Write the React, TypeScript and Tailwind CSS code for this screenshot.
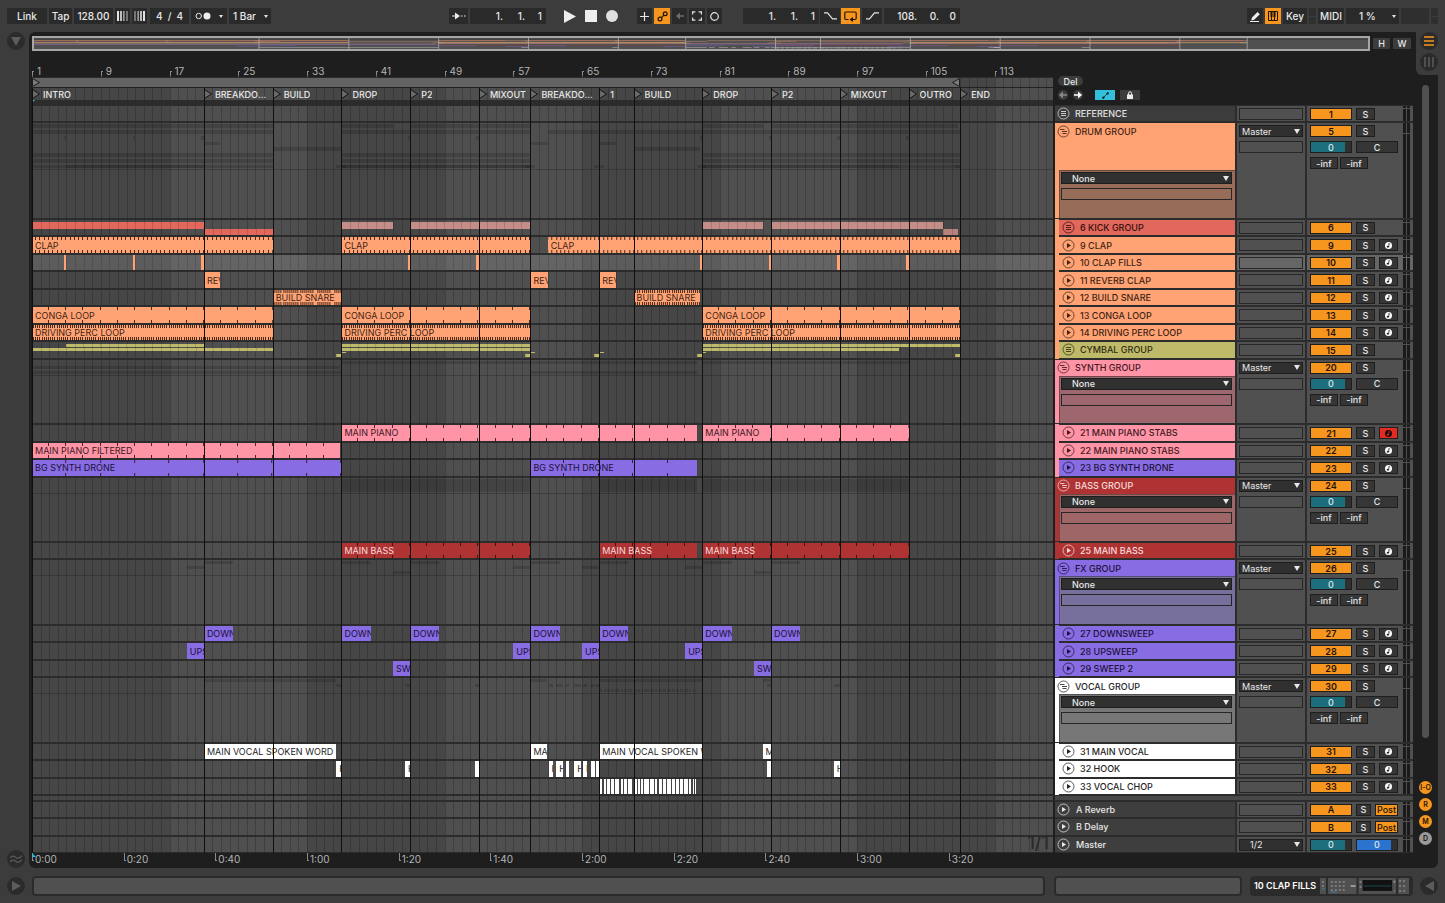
import type { CSSProperties, ReactNode } from "react";

const BARS = 118.8;

const pct = (bars: number) => `${(bars / BARS) * 100}%`;

const TONES = {
   gray: { hex: "#3c3c3c", bg: "bg-[#3c3c3c]", panel: "bg-[#3c3c3c]", text: "text-[#e4e4e4]" },
   orange: { hex: "#ffa374", bg: "bg-[#ffa374]", panel: "bg-[#976c59]", text: "text-[#3f2414]" },
   red: { hex: "#e2675c", bg: "bg-[#e2675c]", panel: "bg-[#8a4a45]", text: "text-[#36100c]" },
   olive: { hex: "#bfba69", bg: "bg-[#bfba69]", panel: "bg-[#7c7a50]", text: "text-[#2f2d14]" },
   pink: { hex: "#ff94a6", bg: "bg-[#ff94a6]", panel: "bg-[#9e666f]", text: "text-[#41191f]" },
   purple: { hex: "#886ce4", bg: "bg-[#886ce4]", panel: "bg-[#77709c]", text: "text-[#1c1238]" },
   crimson: { hex: "#af3333", bg: "bg-[#af3333]", panel: "bg-[#9e6666]", text: "text-[#f6dcdc]" },
   white: { hex: "#ffffff", bg: "bg-white", panel: "bg-[#777777]", text: "text-[#262626]" },
};

type Tone = keyof typeof TONES;
type Clip = [start: number, end: number, label?: string];
type Strip = { top: string; height: string; fill: string; clips: Clip[] };

type Track = {
   name: string;
   num: string;
   tone: Tone;
   kind: "open" | "folded" | "track";
   group?: string;
   size?: number;
   clips?: Clip[];
   tick?: number;
   strips?: Strip[];
   selected?: boolean;
   armed?: boolean;
};

const named = (label: string, spans: [number, number][]): Clip[] => spans.map(([a, b]) => [a, b, label]);

const CHOPS: Clip[] = [
   [0, 0.36], [0.5, 0.76], [0.96, 1.27], [1.4, 1.75], [1.86, 2.34], [2.48, 2.8], [2.9, 3.2], [3.35, 3.76], [4, 4.4],
   [4.5, 4.75], [4.85, 4.95], [5, 5.1], [5.2, 5.3], [5.36, 5.82], [5.86, 6.33], [6.5, 6.75], [7, 7.3], [7.45, 7.75],
   [7.9, 8.35], [8.5, 8.77], [8.93, 9.25], [9.4, 9.75], [9.9, 10.36], [10.5, 10.7], [10.9, 11], [11.15, 11.25],
].map(([a, b]): Clip => [67 + a, 67 + b]);

const TRACKS: Track[] = [
   { name: "REFERENCE", num: "1", tone: "gray", kind: "folded" },
   { name: "DRUM GROUP", num: "5", tone: "orange", kind: "open", size: 193 },
   {
      name: "6 KICK GROUP",
      num: "6",
      tone: "red",
      kind: "folded",
      group: "DRUM GROUP",
      strips: [
         { top: "12%", height: "44%", fill: "bg-[#e2675c]", clips: [[1, 21]] },
         { top: "56%", height: "40%", fill: "bg-[#e2675c]", clips: [[21, 29]] },
         { top: "12%", height: "44%", fill: "bg-[#c58d87]", clips: [[37, 43], [45, 59], [79, 86], [87, 107]] },
         { top: "56%", height: "40%", fill: "bg-[#b8837d]", clips: [[107, 108.7]] },
      ],
   },
   { name: "9 CLAP", num: "9", tone: "orange", kind: "track", group: "DRUM GROUP", tick: 0.5, clips: named("CLAP", [[1, 29], [37, 59], [61, 109]]) },
   {
      name: "10 CLAP FILLS",
      num: "10",
      tone: "orange",
      kind: "track",
      group: "DRUM GROUP",
      selected: true,
      clips: [5, 13, 21, 45, 53, 79, 87, 95, 103].map((bar): Clip => [bar - 0.3, bar]),
   },
   { name: "11 REVERB CLAP", num: "11", tone: "orange", kind: "track", group: "DRUM GROUP", clips: named("REVERB", [[21, 22.9], [59, 61], [67, 68.9]]) },
   { name: "12 BUILD SNARE", num: "12", tone: "orange", kind: "track", group: "DRUM GROUP", tick: 0.25, clips: named("BUILD SNARE", [[29, 37], [71, 78.7]]) },
   { name: "13 CONGA LOOP", num: "13", tone: "orange", kind: "track", group: "DRUM GROUP", tick: 2, clips: named("CONGA LOOP", [[1, 29], [37, 59], [79, 109]]) },
   { name: "14 DRIVING PERC LOOP", num: "14", tone: "orange", kind: "track", group: "DRUM GROUP", tick: 0.25, clips: named("DRIVING PERC LOOP", [[1, 29], [37, 59], [79, 109]]) },
   {
      name: "CYMBAL GROUP",
      num: "15",
      tone: "olive",
      kind: "folded",
      group: "DRUM GROUP",
      strips: [
         { top: "12%", height: "19%", fill: "bg-[#bfba69]", clips: [[5, 21], [37, 59], [79, 109]] },
         { top: "37%", height: "19%", fill: "bg-[#bfba69]", clips: [[1, 29], [37, 59], [79, 101.9]] },
         { top: "62%", height: "10%", fill: "bg-[#bfba69]", clips: [[37, 37.5], [59, 59.5], [67, 67.5], [79, 79.4]] },
         { top: "76%", height: "19%", fill: "bg-[#bfba69]", clips: [[36.4, 37], [58.4, 59], [66.4, 67], [78.4, 79], [108.4, 109]] },
      ],
   },
   { name: "SYNTH GROUP", num: "20", tone: "pink", kind: "open", size: 131 },
   { name: "21 MAIN PIANO STABS", num: "21", tone: "pink", kind: "track", group: "SYNTH GROUP", tick: 2, armed: true, clips: named("MAIN PIANO", [[37, 78.4], [79, 103]]) },
   { name: "22 MAIN PIANO STABS", num: "22", tone: "pink", kind: "track", group: "SYNTH GROUP", tick: 2, clips: named("MAIN PIANO FILTERED", [[1, 36.8]]) },
   { name: "23 BG SYNTH DRONE", num: "23", tone: "purple", kind: "track", group: "SYNTH GROUP", tick: 4, clips: named("BG SYNTH DRONE", [[1, 37], [59, 78.4]]) },
   { name: "BASS GROUP", num: "24", tone: "crimson", kind: "open", size: 131 },
   { name: "25 MAIN BASS", num: "25", tone: "crimson", kind: "track", group: "BASS GROUP", tick: 2, clips: named("MAIN BASS", [[37, 59], [67, 78.4], [79, 103]]) },
   { name: "FX GROUP", num: "26", tone: "purple", kind: "open", size: 131 },
   {
      name: "27 DOWNSWEEP",
      num: "27",
      tone: "purple",
      kind: "track",
      group: "FX GROUP",
      clips: [21, 37, 45, 59, 67, 79, 87].map((bar): Clip => [bar, bar + 3.4, "DOWNSWEEP"]),
   },
   { name: "28 UPSWEEP", num: "28", tone: "purple", kind: "track", group: "FX GROUP", clips: named("UPSWEEP", [[19, 21], [57, 59], [65, 67], [77, 79]]) },
   { name: "29 SWEEP 2", num: "29", tone: "purple", kind: "track", group: "FX GROUP", clips: named("SWEEP", [[43, 45], [85, 87]]) },
   { name: "VOCAL GROUP", num: "30", tone: "white", kind: "open", size: 131 },
   { name: "31 MAIN VOCAL", num: "31", tone: "white", kind: "track", group: "VOCAL GROUP", clips: named("MAIN VOCAL SPOKEN WORD", [[21, 36.4], [59, 60.9], [67, 79], [86, 87]]) },
   {
      name: "32 HOOK",
      num: "32",
      tone: "white",
      kind: "track",
      group: "VOCAL GROUP",
      clips: [
         [36.4, 37, "H"], [44.4, 45, "H"], [52.5, 53], [61.1, 61.6, "H"], [62, 62.8, "H"], [63.1, 63.5], [64.1, 64.9, "H"],
         [65.1, 65.6, "H"], [66.1, 66.5], [66.6, 67], [86.5, 87], [94.3, 95, "H"],
      ],
   },
   { name: "33 VOCAL CHOP", num: "33", tone: "white", kind: "track", group: "VOCAL GROUP", clips: CHOPS },
];

const LOCATORS: [number, string][] = [
   [1, "INTRO"], [21, "BREAKDOWN"], [29, "BUILD"], [37, "DROP"], [45, "P2"], [53, "MIXOUT"], [59, "BREAKDOWN"],
   [67, "1"], [71, "BUILD"], [79, "DROP"], [87, "P2"], [95, "MIXOUT"], [103, "OUTRO"], [109, "END"],
];

const BEAT_MARKS = Array.from({ length: 15 }, (_, i) => 1 + i * 8);
const TIME_MARKS = ["0:00", "0:20", "0:40", "1:00", "1:20", "1:40", "2:00", "2:20", "2:40", "3:00", "3:20"];
const BARS_PER_MARK = 32 / 3;

const gridStyle: CSSProperties = {
   backgroundImage: [
      `repeating-linear-gradient(to right, rgba(0,0,0,.2) 0 1px, transparent 1px ${pct(1)})`,
      `repeating-linear-gradient(to right, #464646 0 ${pct(16)}, #4f4f4f ${pct(16)} ${pct(32)})`,
   ].join(","),
};

const allClips = (t: Track): Clip[] => t.clips ?? t.strips?.flatMap((s) => s.clips) ?? [];

function tickStyle(span: number, every: number): CSSProperties {
   const step = `${(every / span) * 100}%`;
   const line = `repeating-linear-gradient(to right, transparent 0 calc(${step} - 1px), rgba(30,12,5,.8) calc(${step} - 1px) ${step})`;
   return {
      backgroundImage: `${line}, ${line}`,
      backgroundSize: "100% 3px",
      backgroundPosition: "top, bottom",
      backgroundRepeat: "repeat-x",
   };
}

/* ---------- small controls ---------- */

function Tool({ label, children, className = "" }: { label: string; children?: ReactNode; className?: string }) {
   return (
      <button type="button" aria-label={label} className={`flex h-4 shrink-0 items-center justify-center bg-[#2a2a2a] ${className}`}>
         {children}
      </button>
   );
}

function Dropdown({ label, value, className = "", pad = "pl-0.5" }: { label: string; value: string; className?: string; pad?: string }) {
   return (
      <div className={`relative flex h-3 items-center border border-[#1e1e1e] bg-[#303030] ${className}`}>
         <select aria-label={label} defaultValue={value} className={`h-full w-full appearance-none bg-transparent leading-none text-[#e8e8e8] outline-none ${pad}`}>
            <option>{value}</option>
         </select>
         <svg viewBox="0 0 6 5" className="pointer-events-none absolute right-0.5 h-[5px] w-1.5" aria-hidden>
            <path d="M0 0h6L3 5z" fill="#e8e8e8" />
         </svg>
      </div>
   );
}

function Position({ label, parts, className = "" }: { label: string; parts: string[]; className?: string }) {
   return (
      <div role="group" aria-label={label} className={`flex h-4 w-[76px] shrink-0 items-center justify-end bg-[#2a2a2a] pr-1 ${className}`}>
         {parts.map((part, i) => (
            <input
               key={i}
               aria-label={`${label} ${["bars", "beats", "sixteenths"][i]}`}
               defaultValue={part}
               className={`bg-transparent text-right text-[10px] leading-none font-medium outline-none ${i === 2 ? "w-[17px]" : i === 1 ? "w-[22px]" : "w-7"}`}
            />
         ))}
      </div>
   );
}

function Slot({ className = "" }: { className?: string }) {
   return <div className={`h-3 shrink-0 border border-[#262626] ${className}`} />;
}

function RoundIcon({ kind }: { kind: Track["kind"] }) {
   return (
      <svg viewBox="0 0 13 13" className="size-[13px] shrink-0" fill="none" stroke="currentColor" aria-hidden>
         <circle cx="6.5" cy="6.5" r="5.5" strokeOpacity=".75" />
         {kind === "track" && <path d="M5 3.9v5.2l4-2.6z" fill="currentColor" stroke="none" />}
         {kind === "folded" && <path d="M4 4.5h5M4 6.5h5M4 8.5h5" strokeOpacity=".85" />}
         {kind === "open" && <path d="M3 4.5h4.5M5 6.5h5M5.5 8.5h4" strokeOpacity=".85" />}
      </svg>
   );
}

function SoloButton({ className = "w-[19px]" }: { className?: string }) {
   return (
      <button type="button" aria-label="Solo" className={`flex h-3 shrink-0 items-center justify-center border border-[#1e1e1e] bg-[#363636] ${className}`}>
         S
      </button>
   );
}

function ArmButton({ armed }: { armed?: boolean }) {
   return (
      <button
         type="button"
         aria-label="Arm recording"
         aria-pressed={!!armed}
         className={`flex h-3 w-[19px] shrink-0 items-center justify-center border border-[#1e1e1e] ${armed ? "bg-[#e52b20] text-[#1a0b0a]" : "bg-[#363636] text-white"}`}
      >
         <svg viewBox="0 0 7 7" className="size-[7px]" aria-hidden>
            <circle cx="3.5" cy="3.5" r="3.5" fill="currentColor" />
            <ellipse cx="2.9" cy="4.7" rx="1.2" ry=".9" fill={armed ? "#e52b20" : "#222"} />
            <path d="M3.8 4.7V1.4l1.4 1" fill="none" stroke={armed ? "#e52b20" : "#222"} strokeWidth=".7" />
         </svg>
      </button>
   );
}

function Activator({ children }: { children: string }) {
   return (
      <button type="button" aria-label={`Track ${children} active`} aria-pressed className="flex h-3 w-[42px] shrink-0 items-center justify-center border border-[#1e1e1e] bg-[#f7961e] font-semibold text-[#1c1205]">
         {children}
      </button>
   );
}

function Meter({ split }: { split?: boolean }) {
   return (
      <div className="ml-auto flex h-full gap-px" aria-hidden>
         {[0, 1].map((i) => (
            <div key={i} className="flex w-[3px] flex-col gap-px">
               <div className={`bg-[#1a1a1a] ${split ? "h-2.5" : "h-0.5"}`} />
               <div className="flex-1 bg-[#1a1a1a]" />
            </div>
         ))}
      </div>
   );
}

const VOLUME = "h-3 w-[42px] border border-[#1e1e1e] text-center leading-none text-[#dfe9ec] outline-none";

/* ---------- arrangement ---------- */

function Lane({ track }: { track: Track }) {
   const tone = TONES[track.tone];
   const children = track.kind === "open" ? TRACKS.filter((t) => t.group === track.name) : [];

   return (
      <div className="relative min-w-0 flex-1 overflow-hidden border-y border-[#2c2c2c]" style={gridStyle}>
         {track.selected && <div className="absolute inset-0 border-l border-[#a6dbe6] bg-white/12" />}
         {track.kind === "open" && (
            <div className={`flex flex-col border-b border-black/20 ${track.size === 193 ? "h-[47px]" : "h-4"}`}>
               {children.map((child) => (
                  <div key={child.num} className="relative flex-1">
                     {allClips(child).map(([a, b]) => (
                        <div key={a} className="absolute inset-x-0 top-px bottom-px bg-black/15" style={{ left: pct(a - 1), right: pct(BARS + 1 - b) }} />
                     ))}
                  </div>
               ))}
            </div>
         )}
         {track.strips?.map((strip) =>
            strip.clips.map(([a, b]) => (
               <div
                  key={`${strip.top}${a}`}
                  className={`absolute ${strip.fill}`}
                  style={{
                     top: strip.top,
                     height: strip.height,
                     left: pct(a - 1),
                     width: pct(b - a),
                     backgroundImage: `repeating-linear-gradient(to right, rgba(0,0,0,.14) 0 1px, transparent 1px ${100 / (b - a)}%)`,
                  }}
               />
            )),
         )}
         {track.clips?.map(([a, b, label]) => (
            <div
               key={a}
               className={`absolute inset-y-0 flex items-center overflow-hidden whitespace-nowrap ${tone.bg} ${tone.text} ${label ? "pl-[3px]" : ""}`}
               style={{ left: pct(a - 1), width: pct(b - a), ...(track.tick ? tickStyle(b - a, track.tick) : {}) }}
            >
               {label}
            </div>
         ))}
      </div>
   );
}

function TrackHeader({ track }: { track: Track }) {
   const tone = TONES[track.tone];
   const parent = TRACKS.find((t) => t.name === track.group);

   return (
      <div className="flex w-[180px] shrink-0">
         {parent && <div className={`w-1 shrink-0 ${TONES[parent.tone].bg}`} />}
         <div className={`flex min-w-0 flex-1 flex-col border-y border-[#2c2c2c] font-medium ${tone.bg} ${tone.text}`}>
            <div className={`flex shrink-0 ${track.size === 193 ? "h-[47px]" : track.kind === "open" ? "h-4" : "h-full"}`}>
               <div className={`flex items-center gap-[5px] ${track.kind === "open" ? "h-4" : "h-full"} ${parent ? "pl-[3px]" : "pl-0.5"}`}>
                  <RoundIcon kind={track.kind} />
                  <span className="whitespace-nowrap">{track.name}</span>
               </div>
            </div>
            {track.kind === "open" && (
               <div className={`ml-1 flex flex-1 flex-col gap-1 border-t border-l border-black/30 py-px pr-[3px] pl-px ${tone.panel}`}>
                  <Dropdown label={`${track.name} automation device`} value="None" pad="pl-2.5" />
                  <Slot />
               </div>
            )}
         </div>
      </div>
   );
}

function Cell({ className, selected, children }: { className: string; selected?: boolean; children: ReactNode }) {
   return (
      <div className={`ml-0.5 flex shrink-0 border-y border-[#2c2c2c] ${selected ? "bg-[#666666]" : "bg-[#505050]"} ${className}`}>
         {children}
      </div>
   );
}

function TrackRow({ track }: { track: Track }) {
   const open = track.kind === "open";

   return (
      <div className="flex min-h-0 basis-0 bg-[#2c2c2c]" style={{ flexGrow: track.size ?? 35 }}>
         <Lane track={track} />
         <div className="w-0.5 shrink-0 bg-[#1e1e1e]" />
         <TrackHeader track={track} />
         <Cell className="w-[68px] flex-col gap-1 px-0.5 pt-0.5" selected={track.selected}>
            {open ? <Dropdown label={`${track.name} output`} value="Master" /> : <Slot />}
            {open && <Slot />}
         </Cell>
         <Cell className="w-[106px] pr-[3px] pl-[3px] font-medium" selected={track.selected}>
            <div className="flex flex-col gap-1 pt-0.5">
               <div className="flex gap-1">
                  <Activator>{track.num}</Activator>
                  <SoloButton />
                  {track.kind === "track" && <ArmButton armed={track.armed} />}
               </div>
               {open && (
                  <>
                     <div className="flex gap-1">
                        <input aria-label={`${track.name} volume`} defaultValue="0" className={`${VOLUME} bg-linear-to-r from-[#1c6e7d] from-85% to-[#303030] to-85%`} />
                        <input aria-label={`${track.name} pan`} defaultValue="C" className={`${VOLUME} bg-[#363636]`} />
                     </div>
                     <div className="flex gap-0.5">
                        {["left", "right"].map((side) => (
                           <button key={side} type="button" aria-label={`${track.name} ${side} peak`} className="flex h-3 w-7 items-center justify-center border border-[#1e1e1e] bg-[#363636]">
                              -inf
                           </button>
                        ))}
                     </div>
                  </>
               )}
            </div>
            <Meter split={open} />
         </Cell>
      </div>
   );
}

function ReturnRow({ name, letter }: { name: string; letter?: string }) {
   return (
      <div className="flex min-h-0 basis-0 bg-[#2c2c2c]" style={{ flexGrow: 35 }}>
         <div className="relative min-w-0 flex-1 border-y border-[#2c2c2c]" style={gridStyle}>
            {!letter && <span className="absolute right-1 bottom-0 text-lg leading-none font-medium text-[#2a2a2a]">1/1</span>}
         </div>
         <div className="w-0.5 shrink-0 bg-[#1e1e1e]" />
         <div className="flex w-[180px] shrink-0 items-center gap-1.5 border-y border-[#2c2c2c] bg-[#3e3e3e] pl-0.5 font-medium">
            <RoundIcon kind="track" />
            {name}
         </div>
         <Cell className="w-[68px] flex-col px-0.5 pt-0.5">
            {letter ? <Slot /> : <Dropdown label="Master output" value="1/2" pad="pl-2.5" />}
         </Cell>
         <Cell className="w-[106px] gap-1 pr-[3px] pl-[3px] font-medium">
            {letter ? (
               <div className="flex gap-1 pt-0.5">
                  <Activator>{letter}</Activator>
                  <SoloButton className="w-[15px]" />
                  <button type="button" className="flex h-3 w-[23px] items-center justify-center border border-[#1e1e1e] bg-[#f7961e] text-[#1c1205]">
                     Post
                  </button>
               </div>
            ) : (
               <div className="flex gap-1 pt-0.5">
                  <input aria-label="Master volume" defaultValue="0" className={`${VOLUME} bg-linear-to-r from-[#1c6e7d] from-85% to-[#303030] to-85%`} />
                  <input aria-label="Cue volume" defaultValue="0" className={`${VOLUME} bg-linear-to-r from-[#2a74d0] from-85% to-[#303030] to-85%`} />
               </div>
            )}
            <Meter />
         </Cell>
      </div>
   );
}

function Overview() {
   return (
      <svg viewBox={`0 0 ${BARS} 13`} preserveAspectRatio="none" className="h-full w-full bg-[#505050]" role="img" aria-label="Arrangement overview">
         <rect x="0" y="1" width={BARS} height=".7" fill="#333" />
         {TRACKS.map((t, i) =>
            allClips(t).map(([a, b]) => (
               <rect key={`${t.num}-${a}-${b}`} x={a - 1} y={1.6 + i * 0.43} width={b - a} height=".7" fill={TONES[t.tone].hex} opacity=".5" />
            )),
         )}
         {LOCATORS.slice(1).map(([bar]) => (
            <rect key={bar} x={bar - 1} y="0" width=".08" height="13" fill="#b5b5b5" opacity=".8" />
         ))}
      </svg>
   );
}

function Rulers() {
   return (
      <div className="min-w-0 flex-1">
         <div className="relative mt-[13px] h-3.5 border-b border-[#2c2c2c] text-[10px] leading-none text-[#b4b4b4]">
            {BEAT_MARKS.map((bar) => (
               <div key={bar} className="absolute inset-y-0" style={{ left: pct(bar - 1) }}>
                  <span className="absolute bottom-0 h-1.5 w-0.5 border-t border-l border-[#8a8a8a]" />
                  <span className="absolute bottom-px left-[5px]">{bar}</span>
                  <span className="absolute bottom-0 h-0.5 w-px bg-[#666]" />
               </div>
            ))}
         </div>
         <div className="relative h-2.5 border-b border-[#222]" style={gridStyle}>
            <div className="absolute inset-y-0 left-0 bg-[#636363]" style={{ width: pct(108) }}>
               <svg viewBox="0 0 8 9" className="absolute inset-y-0 left-0 h-[9px] w-2" fill="#7a7a7a" stroke="#1c1c1c" aria-hidden>
                  <path d="M.5.5l7 4-7 4z" />
               </svg>
               <svg viewBox="0 0 8 9" className="absolute inset-y-0 right-0 h-[9px] w-2" fill="#7a7a7a" stroke="#1c1c1c" aria-hidden>
                  <path d="M7.5.5l-7 4 7 4z" />
               </svg>
            </div>
         </div>
         <div className="relative h-3" style={gridStyle}>
            {LOCATORS.map(([bar, label], i) => (
               <button
                  key={bar}
                  type="button"
                  className="absolute inset-y-0 flex items-center gap-[3px] overflow-hidden text-left font-medium"
                  style={{ left: pct(bar - 1), width: pct((LOCATORS[i + 1]?.[0] ?? 117) - bar) }}
               >
                  <svg viewBox="0 0 8 12" className="h-3 w-2 shrink-0" fill="#6a6a6a" stroke="#161616" aria-hidden>
                     <path d="M.5 1.5l7 4.5-7 4.5z" />
                  </svg>
                  <span className="truncate">{label}</span>
               </button>
            ))}
         </div>
         <div className="h-[5px] bg-[#2c2c2c]">
            <svg viewBox="0 0 3 3" className="size-[3px]" aria-hidden>
               <path d="M0 0h3L0 3z" fill="#33b7d2" />
            </svg>
         </div>
      </div>
   );
}

function RailButton({ label, children }: { label: string; children: ReactNode }) {
   return (
      <button type="button" aria-label={label} className="flex size-[18px] shrink-0 items-center justify-center rounded-full bg-[#2b2b2b] text-[#5c5c5c]">
         {children}
      </button>
   );
}

const ARROW = "M0 0h10L5 9z";

function TopBar() {
   return (
      <header className="flex h-8 shrink-0 items-center px-[7px] text-[10px] font-medium">
         <div className="flex shrink-0 basis-[442px] gap-0.5">
            <Tool label="Link" className="w-10">Link</Tool>
            <Tool label="Tap tempo" className="w-[23px]">Tap</Tool>
            <input aria-label="Tempo" defaultValue="128.00" className="h-4 w-[39px] bg-[#2a2a2a] text-center outline-none" />
            <Tool label="Nudge down" className="w-[15px]">
               <svg viewBox="0 0 11 10" className="h-2.5 w-[11px]" fill="#e4e4e4" aria-hidden>
                  <path d="M0 0h2v10H0zM3.2 0h1.6v10H3.2zM6.4 0h1v10h-1zM9.6 0h.8v10h-.8z" />
               </svg>
            </Tool>
            <Tool label="Nudge up" className="mr-px w-[15px]">
               <svg viewBox="0 0 11 10" className="h-2.5 w-[11px]" fill="#e4e4e4" aria-hidden>
                  <path d="M.6 0h.8v10H.6zM3.6 0h1v10h-1zM6.2 0h1.6v10H6.2zM9 0h2v10H9z" />
               </svg>
            </Tool>
            <div role="group" aria-label="Time signature" className="flex h-4 w-[39px] items-center justify-between bg-[#2a2a2a] px-1.5">
               <input aria-label="Numerator" defaultValue="4" className="w-2 bg-transparent outline-none" />
               /
               <input aria-label="Denominator" defaultValue="4" className="w-2 bg-transparent text-right outline-none" />
            </div>
            <Tool label="Metronome" className="w-9 gap-2">
               <svg viewBox="0 0 16 8" className="h-2 w-4" aria-hidden>
                  <circle cx="3.7" cy="4" r="2.7" fill="none" stroke="#e4e4e4" />
                  <circle cx="12" cy="4" r="3.5" fill="#eee" />
               </svg>
               <svg viewBox="0 0 4 3" className="h-[3px] w-1" aria-hidden>
                  <path d="M0 0h4L2 3z" fill="#e4e4e4" />
               </svg>
            </Tool>
            <div className="relative flex h-4 w-[42px] items-center bg-[#2a2a2a]">
               <select aria-label="Quantization" defaultValue="1 Bar" className="w-full appearance-none bg-transparent pl-1 outline-none">
                  <option>1 Bar</option>
               </select>
               <svg viewBox="0 0 4 3" className="pointer-events-none absolute right-[3px] h-[3px] w-1" aria-hidden>
                  <path d="M0 0h4L2 3z" fill="#e4e4e4" />
               </svg>
            </div>
         </div>

         <div className="flex shrink-0 items-center">
            <Tool label="Follow" className="mr-0.5 w-[19px]">
               <svg viewBox="0 0 14 8" className="h-2 w-3.5" fill="#eee" aria-hidden>
                  <path d="M0 3.4h3V.6L8 4 3 7.400V4.600H0zM9 3.400h1.500v1.200H9zM12 3.400h1.500v1.200H12z" />
               </svg>
            </Tool>
            <Position label="Arrangement position" parts={["1.", "1.", "1"]} />
            <button type="button" aria-label="Play" className="ml-[18px]">
               <svg viewBox="0 0 12 13" className="h-[13px] w-3" fill="#eee" aria-hidden><path d="M0 0v13l12-6.5z" /></svg>
            </button>
            <button type="button" aria-label="Stop" className="ml-[9px] size-3 bg-[#eee]" />
            <button type="button" aria-label="Record" className="mr-[19px] ml-[9px] size-3 rounded-full bg-[#e0e0e0]" />
            <div className="flex gap-0.5">
               <Tool label="Overdub" className="w-[15px]">
                  <svg viewBox="0 0 9 9" className="size-[9px]" stroke="#e4e4e4" strokeWidth="1.2" aria-hidden><path d="M4.5 0v9M0 4.5h9" /></svg>
               </Tool>
               <button type="button" aria-label="Automation arm" aria-pressed className="flex h-4 w-4 items-center justify-center bg-[#f7961e]">
                  <svg viewBox="0 0 11 11" className="size-[11px]" fill="none" stroke="#1e1404" strokeWidth="1.2" aria-hidden>
                     <circle cx="3" cy="8" r="1.9" /><circle cx="8.2" cy="2.8" r="1.9" /><path d="M4.4 6.6l2.4-2.4" />
                  </svg>
               </button>
               <Tool label="Re-enable automation" className="w-[15px]">
                  <svg viewBox="0 0 8 8" className="size-2" fill="#6b6b6b" aria-hidden><path d="M0 4l4-3.500v2.800h4v1.400H4v2.800z" /></svg>
               </Tool>
               <Tool label="Capture" className="w-4">
                  <svg viewBox="0 0 10 10" className="size-2.5" fill="none" stroke="#e4e4e4" strokeWidth="1.2" aria-hidden>
                     <path d="M.6 3.500V.8h2.800M6.600.8h2.800v2.700M9.400 6.500v2.700H6.600M3.400 9.200H.6V6.500" />
                  </svg>
               </Tool>
               <Tool label="Session record" className="w-[15px]">
                  <svg viewBox="0 0 9 9" className="size-[9px]" fill="none" stroke="#e4e4e4" strokeWidth="1.2" aria-hidden><circle cx="4.5" cy="4.5" r="3.8" /></svg>
               </Tool>
            </div>
            <Position label="Loop start" parts={["1.", "1.", "1"]} className="mr-px ml-[21px]" />
            <Tool label="Punch in" className="mr-px w-5">
               <svg viewBox="0 0 13 8" className="h-2 w-[13px]" fill="none" stroke="#e4e4e4" strokeWidth="1.2" aria-hidden><path d="M0 .8h3.500l5 6H13" /></svg>
            </Tool>
            <button type="button" aria-label="Loop" aria-pressed className="flex h-4 w-[19px] items-center justify-center bg-[#f7961e]">
               <svg viewBox="0 0 13 11" className="h-[11px] w-[13px]" fill="none" stroke="#1e1404" strokeWidth="1.2" aria-hidden>
                  <path d="M4.5 8.5H2a1.2 1.2 0 01-1.2-1.2V2.2A1.2 1.2 0 012 1h9a1.2 1.2 0 011.2 1.2v5.1A1.2 1.2 0 0111 8.5H8" />
                  <path d="M9 6v5L5.5 8.5z" fill="#1e1404" stroke="none" />
               </svg>
            </button>
            <Tool label="Punch out" className="mx-0.5 w-5">
               <svg viewBox="0 0 13 8" className="h-2 w-[13px]" fill="none" stroke="#e4e4e4" strokeWidth="1.2" aria-hidden><path d="M0 6.800h3.500l5-6H13" /></svg>
            </Tool>
            <Position label="Loop length" parts={["108.", "0.", "0"]} />
         </div>

         <div className="ml-auto flex shrink-0 gap-0.5">
            <Tool label="Draw mode" className="w-4">
               <svg viewBox="0 0 11 11" className="size-[11px]" fill="#eee" aria-hidden><path d="M2 6.500L7.500 1l2.300 2.200L4.200 8.700l-3 .8zM0 10h9v1H0z" /></svg>
            </Tool>
            <button type="button" aria-label="Computer MIDI keyboard" aria-pressed className="flex h-4 w-4 items-center justify-center bg-[#f7961e]">
               <svg viewBox="0 0 10 10" className="size-2.5" fill="none" stroke="#1e1404" aria-hidden>
                  <path d="M.5.5h9v9h-9zM3.500 5v4.500M6.500 5v4.500" /><path d="M3.500.5V6M6.500.5V6" strokeWidth="2" />
               </svg>
            </button>
            <Tool label="Key map" className="w-6">Key</Tool>
            <div className="flex w-[7px] flex-col gap-px"><div className="flex-1 bg-[#2f2f2f]" /><div className="flex-1 bg-[#2f2f2f]" /></div>
            <Tool label="MIDI map" className="w-[26px]">MIDI</Tool>
            <div className="relative flex h-4 w-[53px] items-center bg-[#2a2a2a]">
               <select aria-label="CPU load" defaultValue="1 %" className="w-full appearance-none bg-transparent pl-[13px] outline-none">
                  <option>1 %</option>
               </select>
               <svg viewBox="0 0 4 3" className="pointer-events-none absolute right-[3px] h-[3px] w-1" aria-hidden>
                  <path d="M0 0h4L2 3z" fill="#e4e4e4" />
               </svg>
            </div>
            <div className="h-4 w-7 bg-[#2f2f2f]" />
            <div className="flex w-[7px] flex-col gap-px"><div className="flex-1 bg-[#2f2f2f]" /><div className="flex-1 bg-[#2f2f2f]" /></div>
         </div>
      </header>
   );
}

export default function App() {
   return (
      <div className="flex h-screen min-h-[860px] min-w-[1200px] flex-col bg-[#3c3c3c] font-['Inter','Liberation_Sans',sans-serif] text-[9px] leading-none text-[#e8e8e8]">
         <TopBar />

         <main className="flex min-h-0 flex-1">
            <div className="flex w-[29px] shrink-0 flex-col justify-between pl-[7px]">
               <RailButton label="Show browser">
                  <svg viewBox="0 0 10 9" className="h-[9px] w-2.5" fill="currentColor" aria-hidden><path d={ARROW} /></svg>
               </RailButton>
               <RailButton label="Groove pool">
                  <svg viewBox="0 0 12 8" className="h-2 w-3" fill="none" stroke="currentColor" strokeWidth="1.2" aria-hidden>
                     <path d="M0 3c2-3 4-2 6-.5S10 3 12 .5M0 7c2-3 4-2 6-.5S10 7 12 4.5" />
                  </svg>
               </RailButton>
            </div>

            <div className="mr-[7px] flex min-w-0 flex-1 overflow-hidden rounded-md bg-[#1e1e1e]">
               <div className="flex min-w-0 flex-1 flex-col px-[3px]">
                  <div className="mt-1 flex h-[15px] shrink-0 items-center">
                     <div className="h-full min-w-0 flex-1 border-2 border-[#a6a6a6]">
                        <Overview />
                     </div>
                     <div className="flex w-[43px] shrink-0 justify-end gap-[3px] pr-0.5 font-medium">
                        <button type="button" aria-label="Optimize height" className="flex h-[11px] w-[17px] items-center justify-center bg-[#3c3c3c]">H</button>
                        <button type="button" aria-label="Optimize width" className="flex h-[11px] w-[18px] items-center justify-center bg-[#3c3c3c]">W</button>
                     </div>
                  </div>

                  <div className="flex shrink-0">
                     <Rulers />
                     <div className="flex w-[360px] shrink-0 flex-col gap-1 pt-[25px] pl-[5px] font-medium">
                        <button type="button" className="flex h-2.5 w-[25px] items-center justify-center rounded-full bg-[#3c3c3c]">Del</button>
                        <div className="flex items-center">
                           <button type="button" aria-label="Previous locator" className="flex size-2.5 items-center justify-center rounded-full bg-[#3c3c3c]">
                              <svg viewBox="0 0 8 8" className="size-2" fill="#8a8a8a" aria-hidden><path d="M0 4l4-3.500v2.700h4v1.600H4v2.700z" /></svg>
                           </button>
                           <button type="button" aria-label="Next locator" className="ml-[5px] flex size-2.5 items-center justify-center rounded-full bg-[#3c3c3c]">
                              <svg viewBox="0 0 8 8" className="size-2" fill="#fff" aria-hidden><path d="M8 4L4 .5v2.700H0v1.600h4v2.700z" /></svg>
                           </button>
                           <button type="button" aria-label="Automation mode" aria-pressed className="ml-3 flex h-2.5 w-5 items-center justify-center bg-[#33c0da]">
                              <svg viewBox="0 0 8 8" className="size-[7px]" stroke="#10282e" fill="#10282e" aria-hidden><path d="M1.5 6.5l5-5" /><circle cx="1.5" cy="6.5" r="1" /><circle cx="6.5" cy="1.5" r="1" /></svg>
                           </button>
                           <button type="button" aria-label="Lock envelopes" className="ml-[5px] flex h-2.5 w-5 items-center justify-center bg-[#3c3c3c]">
                              <svg viewBox="0 0 8 8" className="size-2" aria-hidden><path d="M1 3.5h6V8H1z" fill="#eee" /><path d="M2.5 4V2.3a1.5 1.5 0 013 0V4" fill="none" stroke="#eee" /></svg>
                           </button>
                        </div>
                     </div>
                  </div>

                  <div className="relative flex min-h-0 flex-1 flex-col">
                     {TRACKS.map((track) => (
                        <TrackRow key={track.num} track={track} />
                     ))}
                     <div className="flex basis-0 bg-[#2c2c2c]" style={{ flexGrow: 11 }}>
                        <div className="my-px min-w-0 flex-1" style={gridStyle} />
                        <div className="my-px w-[360px] border-l-2 border-[#1e1e1e] bg-[#484848]" />
                     </div>
                     <ReturnRow name="A Reverb" letter="A" />
                     <ReturnRow name="B Delay" letter="B" />
                     <ReturnRow name="Master" />
                     <div className="pointer-events-none absolute -top-[17px] right-[360px] bottom-0 left-0">
                        {LOCATORS.map(([bar]) => (
                           <div key={bar} className="absolute inset-y-0 w-px bg-[#101010]" style={{ left: pct(bar - 1) }} />
                        ))}
                     </div>
                  </div>

                  <div className="relative mr-[360px] h-[15px] shrink-0 text-[10px] text-[#b4b4b4]">
                     {TIME_MARKS.map((time, i) => (
                        <div key={time} className="absolute inset-y-0" style={{ left: pct(i * BARS_PER_MARK) }}>
                           <span className="absolute top-0 h-2 w-0.5 border-b border-l border-[#8a8a8a]" />
                           <span className="absolute top-px left-[3px]">{time}</span>
                        </div>
                     ))}
                     <svg viewBox="0 0 4 4" className="absolute top-0 left-0 size-1" aria-hidden>
                        <path d="M0 0l4 4H0z" fill="#33b7d2" />
                     </svg>
                  </div>
               </div>

               <div className="flex w-[22px] shrink-0 flex-col">
                  <div className="flex h-[43px] flex-col items-end gap-[3px] rounded-bl-md bg-[#3c3c3c]">
                     <RailButton label="Arrangement view">
                        <svg viewBox="0 0 10 10" className="size-2.5" stroke="#f7961e" strokeWidth="1.5" aria-hidden><path d="M0 1h10M0 5h10M0 9h10" /></svg>
                     </RailButton>
                     <RailButton label="Session view">
                        <svg viewBox="0 0 10 10" className="size-2.5" stroke="currentColor" strokeWidth="1.5" aria-hidden><path d="M1 0v10M5 0v10M9 0v10" /></svg>
                     </RailButton>
                  </div>
                  <div className="mt-2.5 mb-[43px] ml-1.5 w-[7px] flex-1 rounded-full bg-[#505050]" />
                  <div className="mb-[23px] flex flex-col gap-1 pl-[3px] text-[7px] font-semibold text-[#1e1404]">
                     <button type="button" className="flex size-[13px] items-center justify-center rounded-full bg-[#f7961e]">I-O</button>
                     <button type="button" className="flex size-[13px] items-center justify-center rounded-full bg-[#f7961e]">R</button>
                     <button type="button" className="flex size-[13px] items-center justify-center rounded-full bg-[#f7961e]">M</button>
                     <button type="button" className="flex size-[13px] items-center justify-center rounded-full bg-[#9a9a9a]">D</button>
                  </div>
               </div>
            </div>
         </main>

         <footer className="flex h-[35px] shrink-0 items-center px-[7px]">
            <RailButton label="Show help">
               <svg viewBox="0 0 9 10" className="h-2.5 w-[9px]" fill="currentColor" aria-hidden><path d="M0 0v10l9-5z" /></svg>
            </RailButton>
            <div className="ml-[7px] h-5 flex-1 rounded-sm border-2 border-[#2b2b2b] bg-[#505050]" />
            <div className="ml-[9px] h-5 w-[188px] rounded-sm border-2 border-[#2b2b2b] bg-[#505050]" />
            <div className="ml-2 flex h-5 w-[163px] shrink-0 items-center justify-between rounded-sm bg-[#2b2b2b] pr-[3px] pl-1 text-[9px] font-semibold whitespace-nowrap text-white">
               10 CLAP FILLS
               <svg viewBox="0 0 91 16" className="h-4 w-[90px] shrink-0" aria-hidden>
                  <path d="M0 0h6v16H0zM8 0h29v16H8zM39 0h38v16H39zM79 0h11v16H79z" fill="#505050" />
                  <path d="M43 2h30v11H43z" fill="#111" />
                  <path d="M44 8h28" stroke="#1d6470" strokeWidth=".7" />
                  <path d="M11 4h16M11 8h16M11 12h16M80 3h8M80 8h8M80 13h8M2 4h3M2 8h3M40 4h2M40 9h2M74 4h2" stroke="#8a8a8a" strokeWidth="1.5" strokeDasharray="2 2" />
                  <path d="M31 7h5v2h-5z" fill="#999" />
                  <path d="M2 11h3M11 14h6" stroke="#3b7fb5" />
                  <path d="M75 3h1M75 13h1" stroke="#e08b25" />
               </svg>
            </div>
            <div className="ml-[7px]">
               <RailButton label="Hide device view">
                  <svg viewBox="0 0 9 10" className="h-2.5 w-[9px]" fill="currentColor" aria-hidden><path d="M9 0v10L0 5z" /></svg>
               </RailButton>
            </div>
         </footer>
      </div>
   );
}
